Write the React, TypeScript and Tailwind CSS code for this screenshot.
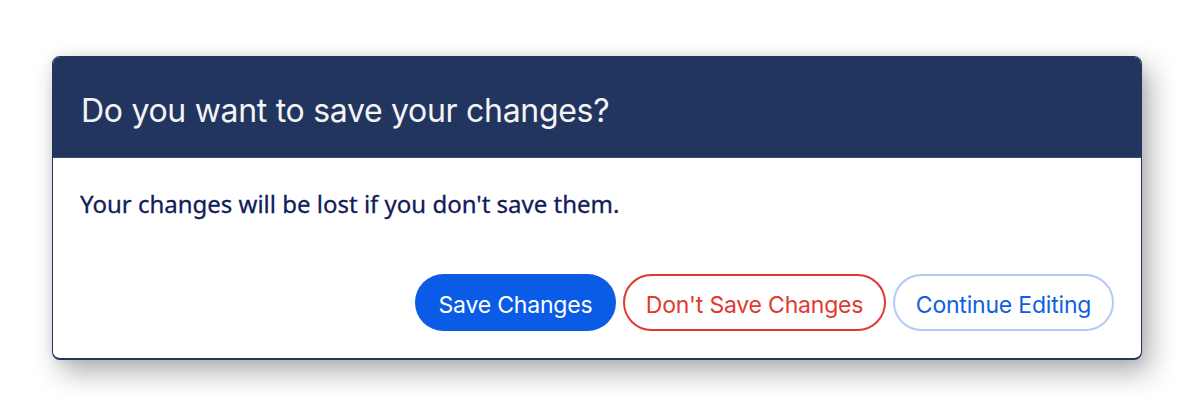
export default function App() {
  return (
    <div className="min-h-[416px] w-[1194px] bg-white pt-[56px] pl-[52px]">
      <div className="w-[1090px] h-[304px] overflow-hidden rounded-[8px] border border-[#22355f] border-b-2 bg-white shadow-[8px_12px_28px_rgba(0,0,0,0.32),0_0_10px_rgba(0,0,0,0.08)] flex flex-col">
        <div className="h-[101px] shrink-0 bg-[#22355f] flex items-center px-[28px] pt-[8px] border-b border-[#3b4c73]">
          <h2 className="text-[32px] text-[#f4f4f6] font-['Inter',sans-serif] font-normal tracking-[-0.3px]">
            Do you want to save your changes?
          </h2>
        </div>
        <div className="flex-1 flex flex-col px-[27px]">
          <p className="mt-[31px] text-[24px] leading-[30px] font-normal text-[#121c5a] font-['Noto_Sans',sans-serif] [-webkit-text-stroke:0.3px_#121c5a]">
            Your changes will be lost if you don't save them.
          </p>
          <div className="mt-auto mb-[27px] flex justify-end gap-[7px] font-['Inter',sans-serif] text-[23px] tracking-[-0.2px]">
            <button className="h-[57px] w-[201px] pt-[5px] rounded-full bg-[#0a5ce6] text-white">
              Save Changes
            </button>
            <button className="h-[57px] w-[263px] pt-[5px] rounded-full border-2 border-[#e03a30] text-[#e03a30] bg-white">
              Don't Save Changes
            </button>
            <button className="h-[57px] w-[221px] pt-[5px] rounded-full border-2 border-[#b1cbf5] text-[#0f5fe0] bg-white">
              Continue Editing
            </button>
          </div>
        </div>
      </div>
    </div>
  )
}
